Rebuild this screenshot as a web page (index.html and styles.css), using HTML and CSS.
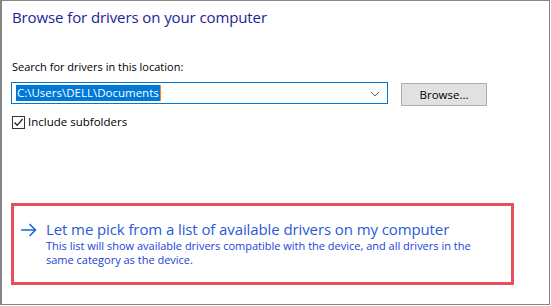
FILE: index.html
```html
<!DOCTYPE html>
<html lang="en">
<head>
    <meta charset="UTF-8">
    <meta name="viewport" content="width=device-width, initial-scale=1.0">
    <title>Browse for drivers</title>
    <link rel="stylesheet" href="styles.css">
</head>
<body>

<div class="window">
    <h1 class="title">Browse for drivers on your computer</h1>

    <div class="field-label">Search for drivers in this location:</div>

    <div class="path-row">
        <div class="combo">
            <span class="combo-text">C:\Users\DELL\Documents</span><span class="caret"></span>
            <svg class="chevron" width="10" height="6" viewBox="0 0 10 6">
                <path d="M1 1 L5 5 L9 1" fill="none" stroke="#606060" stroke-width="1"/>
            </svg>
        </div>
        <div class="btn">Browse...</div>
    </div>

    <label class="check-row">
        <span class="checkbox">
            <svg width="11" height="11" viewBox="0 0 11 11">
                <path d="M1.5 5.5 L4.2 8.3 L9.6 2" fill="none" stroke="#222" stroke-width="1.3"/>
            </svg>
        </span>
        Include subfolders
    </label>

    <!-- highlighted option -->
    <div class="pick-box">
        <span class="arrow">
            <svg width="17" height="14" viewBox="0 0 17 14">
                <path d="M1 7 H15.5 M9.5 1 L15.5 7 L9.5 13" fill="none" stroke="#1565d8" stroke-width="1.5"/>
            </svg>
        </span>
        <div class="pick-text">
            <div class="pick-title">Let me pick from a list of available drivers on my computer</div>
            <div class="pick-desc">This list will show available drivers compatible with the device, and all drivers in the same category as the device.</div>
        </div>
    </div>
</div>

</body>
</html>
```

FILE: styles.css
```css
* {
    margin: 0;
    padding: 0;
    box-sizing: border-box;
}

body {
    background: #fff;
    font-family: "Open Sans", "Noto Sans", sans-serif;
    font-size: 11px;
    color: #000;
}

/* outer window frame */
.window {
    width: 550px;
    height: 305px;
    border: 1px solid #858585;
    border-left-width: 2px;
    padding: 5px 10px 0 10px;
    display: flex;
    flex-direction: column;
}

.title {
    font-size: 15px;
    font-weight: 400;
    line-height: 22px;
    color: #1a2596;
    letter-spacing: -0.1px;
}

.field-label {
    margin-top: 31px;
    line-height: 16px;
}

.path-row {
    display: flex;
    align-items: flex-start;
    margin-top: 7px;
}

.combo {
    position: relative;
    width: 377px;
    height: 22px;
    margin-left: -1px;
    border: 1px solid #0078d7;
    display: flex;
    align-items: center;
    padding-left: 4px;
}

.combo-text {
    background: #0078d7;
    color: #fff;
    font-size: 11.5px;
    line-height: 16px;
    padding: 0 1px;
}

.caret {
    width: 1px;
    height: 16px;
    background: #f08a24;
}

.chevron {
    position: absolute;
    right: 7px;
    top: 8px;
}

.btn {
    margin-left: 13px;
    margin-top: 1px;
    width: 86px;
    height: 23px;
    background: #e1e1e1;
    border: 1px solid #adadad;
    display: flex;
    align-items: center;
    justify-content: center;
    font-size: 11.5px;
}

.check-row {
    display: flex;
    align-items: center;
    gap: 3px;
    margin-top: 8px;
    line-height: 16px;
    font-size: 11.5px;
}

.checkbox {
    width: 13px;
    height: 13px;
    border: 1px solid #333;
    display: flex;
    align-items: center;
    justify-content: center;
}

.pick-box {
    margin-top: 73px;
    margin-left: -1px;
    width: 503px;
    height: 82px;
    border: 3px solid #e8505b;
    display: flex;
    align-items: flex-start;
    padding: 13px 0 0 6px;
}

.arrow {
    margin-top: 4px;
    width: 26px;
}

.pick-title {
    font-size: 15px;
    line-height: 20px;
    color: #2a5ad8;
    letter-spacing: -0.1px;
}

.pick-desc {
    font-size: 11px;
    line-height: 14px;
    color: #1a3fd8;
    width: 450px;
}
```
